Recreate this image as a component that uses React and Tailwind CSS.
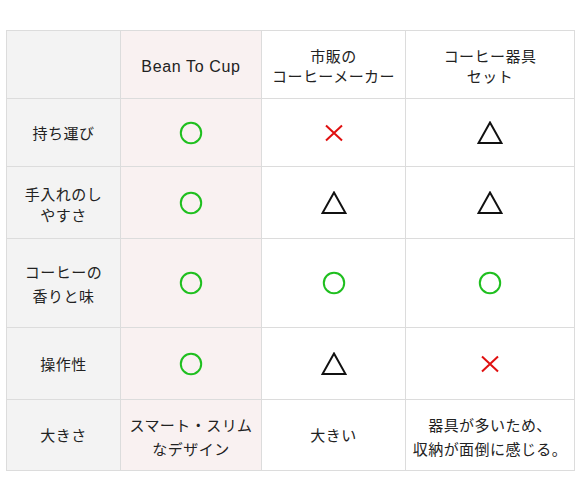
import React from 'react'

const Circle = () => (
  <svg width="24" height="24" viewBox="0 0 24 24">
    <circle cx="12" cy="12" r="10.2" fill="none" stroke="#1fbf1f" strokeWidth="2" />
  </svg>
)

const Triangle = () => (
  <svg width="26" height="24" viewBox="0 0 26 24">
    <path d="M13 1.5 L24.5 22 L1.5 22 Z" fill="none" stroke="#111" strokeWidth="2" strokeLinejoin="miter" />
  </svg>
)

const Cross = () => (
  <svg width="20" height="20" viewBox="0 0 20 20">
    <path d="M2 2.5 L18 17.5 M18 2.5 L2 17.5" stroke="#e01010" strokeWidth="2" />
  </svg>
)

const mark = { o: <Circle />, t: <Triangle />, x: <Cross /> }

const rows = [
  { h: 'h-[68px]', label: ['持ち運び'], cells: ['o', 'x', 't'] },
  { h: 'h-[72px]', label: ['手入れのし', 'やすさ'], cells: ['o', 't', 't'], lh: 'leading-[21px]' },
  { h: 'h-[89px]', label: ['コーヒーの', '香りと味'], cells: ['o', 'o', 'o'] },
  { h: 'h-[72px]', label: ['操作性'], cells: ['o', 't', 'x'] },
  {
    h: 'h-[71px]',
    label: ['大きさ'],
    cells: [['スマート・スリム', 'なデザイン'], ['大きい'], ['器具が多いため、', '収納が面倒に感じる。']],
  },
]

const Lines = ({ lines }) =>
  lines.map((l, i) => (
    <React.Fragment key={i}>
      {i > 0 && <br />}
      {l}
    </React.Fragment>
  ))

const cell = 'flex items-center justify-center text-center border-r border-b border-[#dcdcdc]'
const colBg = ['bg-[#f3f3f3]', 'bg-[#f9f1f1]', 'bg-white', 'bg-white']

export default function App() {
  return (
    <div
      className="w-[580px] h-[498px] bg-white pt-[30px] pl-[6px] text-[15px] text-[#222] tracking-[0.03em]"
      style={{ fontFamily: '"Liberation Sans", "Noto Sans CJK JP", sans-serif' }}
    >
      <div className="grid w-[569px] grid-cols-[114px_141px_144px_169px] border-l border-t border-[#dcdcdc]">
        <div className={`${cell} ${colBg[0]} h-[68px]`} />
        <div className={`${cell} ${colBg[1]} h-[68px] pt-[5px] leading-5 text-[16px] tracking-[0.04em]`}>Bean To Cup</div>
        <div className={`${cell} ${colBg[2]} h-[68px] pt-[5px] leading-5`}>
          <div>
            <Lines lines={['市販の', 'コーヒーメーカー']} />
          </div>
        </div>
        <div className={`${cell} ${colBg[3]} h-[68px] pt-[5px] leading-5`}>
          <div>
            <Lines lines={['コーヒー器具', 'セット']} />
          </div>
        </div>

        {rows.map((r, ri) => (
          <React.Fragment key={ri}>
            <div
              className={`${cell} ${colBg[0]} ${r.h} ${r.lh || 'leading-6'} ${r.label.length > 1 ? 'pt-[4px]' : 'pt-[2px]'}`}
            >
              <div>
                <Lines lines={r.label} />
              </div>
            </div>
            {r.cells.map((c, ci) => (
              <div
                key={ci}
                className={`${cell} ${colBg[ci + 1]} ${r.h} leading-6 ${
                  typeof c === 'string' ? '' : c.length > 1 ? 'pt-[5px]' : 'pt-[2px]'
                }`}
              >
                {typeof c === 'string' ? mark[c] : (
                  <div>
                    <Lines lines={c} />
                  </div>
                )}
              </div>
            ))}
          </React.Fragment>
        ))}
      </div>
    </div>
  )
}
